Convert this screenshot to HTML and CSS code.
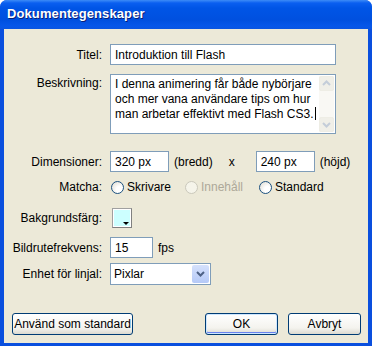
FILE: index.html
```html
<!DOCTYPE html>
<html lang="sv">
<head>
  <meta charset="UTF-8" />
  <title>Dokumentegenskaper</title>
  <link rel="stylesheet" href="styles.css">
</head>
<body>

  <div class="window">
    <div class="titlebar">Dokumentegenskaper</div>

    <div class="content">
      <div class="row row-title">
        <label class="label">Titel:</label>
        <div class="field field-wide">Introduktion till Flash</div>
      </div>

      <div class="row row-desc">
        <label class="label">Beskrivning:</label>
        <div class="textarea">
          <div class="textarea-text">I denna animering får både nybörjare och mer vana användare tips om hur man arbetar effektivt med Flash CS3.<span class="caret"></span></div>
          <div class="scrollbar">
            <div class="scroll-btn"><svg width="15" height="15" viewBox="0 0 15 15"><path d="M4 9 L7.5 5.5 L11 9" fill="none" stroke="#c4cdd9" stroke-width="2"/></svg></div>
            <div class="scroll-track"></div>
            <div class="scroll-btn"><svg width="15" height="15" viewBox="0 0 15 15"><path d="M4 6 L7.5 9.5 L11 6" fill="none" stroke="#c4cdd9" stroke-width="2"/></svg></div>
          </div>
        </div>
      </div>

      <div class="row row-dim">
        <label class="label">Dimensioner:</label>
        <div class="field field-dim">320 px</div>
        <span class="unit">(bredd)</span>
        <span class="times">x</span>
        <div class="field field-dim">240 px</div>
        <span class="unit">(höjd)</span>
      </div>

      <div class="row row-match">
        <label class="label">Matcha:</label>
        <div class="radio"><span class="radio-dot"></span>Skrivare</div>
        <div class="radio disabled"><span class="radio-dot"></span>Innehåll</div>
        <div class="radio"><span class="radio-dot"></span>Standard</div>
      </div>

      <div class="row row-bg">
        <label class="label">Bakgrundsfärg:</label>
        <div class="swatch"><span class="swatch-arrow"></span></div>
      </div>

      <div class="row row-fps">
        <label class="label">Bildrutefrekvens:</label>
        <div class="field field-fps">15</div>
        <span class="unit">fps</span>
      </div>

      <div class="row row-unit">
        <label class="label">Enhet för linjal:</label>
        <div class="select">
          <span class="select-value">Pixlar</span>
          <span class="select-btn"><svg width="17" height="18" viewBox="0 0 17 18"><path d="M5 7 L8.5 10.5 L12 7" fill="none" stroke="#4d6185" stroke-width="2"/></svg></span>
        </div>
      </div>

      <div class="buttons">
        <button class="btn btn-default-std">Använd som standard</button>
        <div class="btn-right">
          <button class="btn btn-ok">OK</button>
          <button class="btn btn-cancel">Avbryt</button>
        </div>
      </div>
    </div>
  </div>

</body>
</html>
```

FILE: styles.css
```css
/* General */
body {
  margin: 0;
  background: #fff;
  font-family: "Liberation Sans", Arial, sans-serif;
  font-size: 12px;
  color: #000;
}

/* Window frame */
.window {
  width: 372px;
  height: 346px;
  box-sizing: border-box;
  display: flex;
  flex-direction: column;
  background: #0a4fde;
  border-radius: 7px 7px 0 0;
  overflow: hidden;
}

.titlebar {
  height: 29px;
  flex-shrink: 0;
  box-sizing: border-box;
  padding: 6px 0 0 7px;
  background: linear-gradient(to bottom, #3d8cf7 0, #0a5ff0 3px, #0055e6 8px, #0050df 20px, #0657e9 26px, #0a55e0 29px);
  color: #fff;
  font-size: 13px;
  font-weight: bold;
  text-shadow: 1px 1px 0 #0a1f77;
  letter-spacing: 0.1px;
}

.content {
  flex: 1;
  margin: 0 4px 3px 4px;
  background: #ece9d8;
  padding-top: 15px;
  display: flex;
  flex-direction: column;
}

/* Rows */
.row {
  display: flex;
  align-items: center;
}

.label {
  width: 98px;
  flex-shrink: 0;
  text-align: right;
  margin-right: 8px;
}

.row-title { height: 21px; }
.row-desc { align-items: flex-start; margin-top: 9px; }
.row-desc .label { padding-top: 2px; }
.row-dim { height: 21px; margin-top: 17px; }
.row-match { height: 20px; margin-top: 5px; }
.row-bg { height: 20px; margin-top: 11px; }
.row-fps { height: 21px; margin-top: 9px; }
.row-unit { height: 22px; margin-top: 5px; }

/* Inputs */
.field {
  height: 21px;
  box-sizing: border-box;
  border: 1px solid #7f9db9;
  background: #fff;
  padding: 3px 4px 0;
  white-space: nowrap;
}

.field-wide { width: 226px; }
.field-dim { width: 59px; }
.field-fps { width: 43px; }

.unit { margin-left: 5px; }
.times { margin: 0 21px 0 16px; }

/* Textarea */
.textarea {
  width: 226px;
  height: 60px;
  box-sizing: border-box;
  border: 1px solid #7f9db9;
  background: #fff;
  display: flex;
}

.textarea-text {
  flex: 1;
  padding: 2px 2px 0 4px;
  line-height: 15px;
}

.caret {
  display: inline-block;
  width: 1px;
  height: 13px;
  background: #000;
  vertical-align: -2px;
  margin-left: 1px;
}

.scrollbar {
  width: 15px;
  margin: 1px 1px 1px 0;
  display: flex;
  flex-direction: column;
  background: #f9f8f4;
}

.scroll-btn {
  height: 15px;
  box-sizing: border-box;
  border: 1px solid #eeede5;
  border-radius: 2px;
  background: #f0efe8;
}

.scroll-btn svg { display: block; margin: -1px; }

.scroll-track { flex: 1; }

/* Radios */
.radio {
  display: flex;
  align-items: center;
  width: 74px;
}

.radio-dot {
  width: 11px;
  height: 11px;
  border: 1px solid #1c5180;
  border-radius: 50%;
  background: radial-gradient(circle at 70% 70%, #fff 30%, #dcd9ce 100%);
  margin: 0 3px 0 1px;
}

.radio.disabled { color: #aca899; }
.radio.disabled .radio-dot { border-color: #cac8bb; background: #f5f4ea; }

/* Colour swatch */
.swatch {
  width: 18px;
  height: 18px;
  margin-left: 2px;
  border: 1px solid #a0a0a0;
  border-right-color: #808080;
  border-bottom-color: #808080;
  background: #ccffff;
  box-shadow: inset 0 0 0 1px #fff;
  position: relative;
}

.swatch-arrow {
  position: absolute;
  right: 2px;
  bottom: 2px;
  width: 0;
  height: 0;
  border-left: 3px solid transparent;
  border-right: 3px solid transparent;
  border-top: 3px solid #000;
}

/* Select */
.select {
  width: 101px;
  height: 22px;
  box-sizing: border-box;
  border: 1px solid #7f9db9;
  background: #fff;
  display: flex;
  align-items: center;
}

.select-value {
  flex: 1;
  padding-left: 3px;
}

.select-btn {
  width: 17px;
  height: 18px;
  margin-right: 1px;
  border-radius: 2px;
  background: linear-gradient(to bottom, #d5e1fc, #b5c9f7);
  border: 0;
}

.select-btn svg { display: block; }

/* Buttons */
.buttons {
  margin-top: 28px;
  padding: 0 7px 0 8px;
  display: flex;
  justify-content: space-between;
}

.btn-right {
  display: flex;
  gap: 10px;
}

.btn {
  height: 22px;
  box-sizing: border-box;
  border: 1px solid #003c74;
  border-radius: 3px;
  background: linear-gradient(to bottom, #ffffff, #f4f3ee 70%, #dcdad0);
  font-family: "Liberation Sans", Arial, sans-serif;
  font-size: 12px;
  color: #000;
  padding: 0;
}

.btn-default-std { width: 121px; }
.btn-ok {
  width: 73px;
  box-shadow: inset 0 0 0 1px #cee7ff, inset 0 -1px 0 1px #6982ee;
}
.btn-cancel { width: 73px; }
```
